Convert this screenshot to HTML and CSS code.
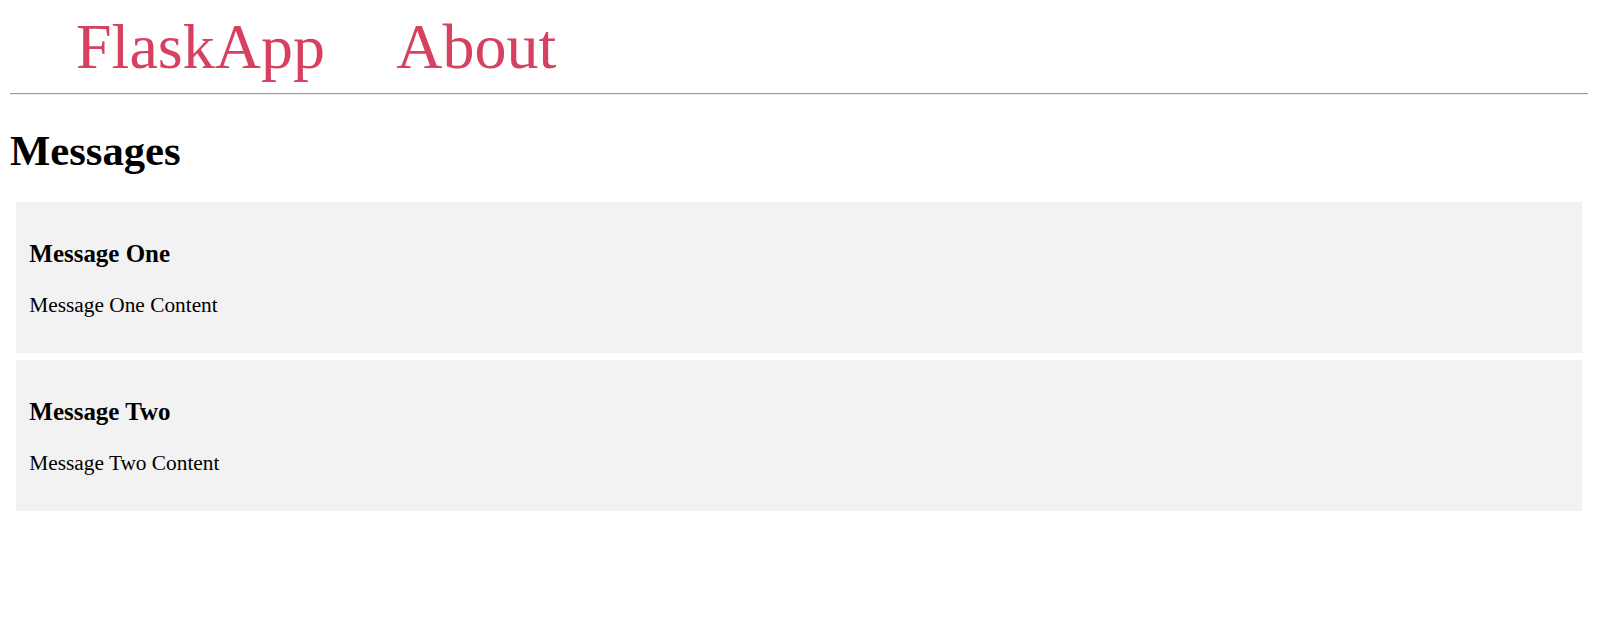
FILE: index.html
```html
<!DOCTYPE html>
<html>
<head>
<meta charset="utf-8">
<title>FlaskApp</title>
<link rel="stylesheet" href="styles.css">
</head>
<body>
<nav class="nav">
  <a class="nav-link" href="#">FlaskApp</a>
  <a class="nav-link" href="#">About</a>
</nav>
<hr class="rule">
<div class="content">
  <h1 class="title">Messages</h1>
  <div class="message">
    <h3 class="message-title">Message One</h3>
    <p class="message-body">Message One Content</p>
  </div>
  <div class="message">
    <h3 class="message-title">Message Two</h3>
    <p class="message-body">Message Two Content</p>
  </div>
</div>
</body>
</html>
```

FILE: styles.css
```css
html, body {
  background: #ffffff;
}
body {
  margin: 10px;
  font-family: "Liberation Serif", "Times New Roman", serif;
  font-size: 21.33px;
  color: #000;
}
.nav-link {
  color: #d64161;
  font-size: 64px;
  margin-left: 66px;
  text-decoration: none;
}
.rule {
  margin: 9px 0 0;
  border: none;
  border-top: 1px solid #9a9a9a;
  border-bottom: 1px solid #eeeeee;
  height: 0;
}
.title {
  font-size: 42.67px;
  font-weight: bold;
  margin: 30.6px 0 27.6px;
}
.message {
  padding: 13.33px;
  margin: 6.67px 6px;
  background-color: #f2f2f2;
}
.message-title {
  font-size: 24.96px;
  font-weight: bold;
  margin: 24.96px 0;
}
.message-body {
  font-size: 21.33px;
  margin: 21.33px 0;
}
```
